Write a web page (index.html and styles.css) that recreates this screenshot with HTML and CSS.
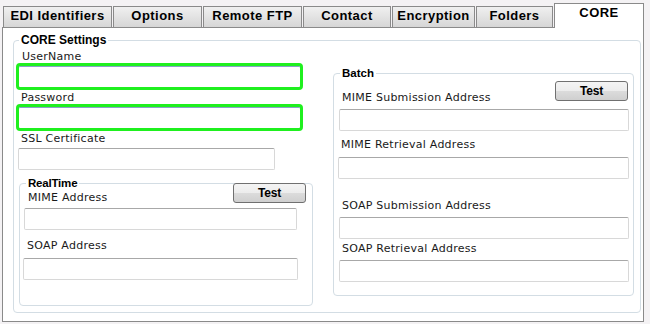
FILE: index.html
```html
<!DOCTYPE html>
<html>
<head>
<meta charset="utf-8">
<title>CORE</title>
<link rel="stylesheet" href="styles.css">
</head>
<body>
<div class="tabs">
  <div class="tab t-edi">EDI Identifiers</div>
  <div class="tab t-options">Options</div>
  <div class="tab t-ftp">Remote FTP</div>
  <div class="tab t-contact">Contact</div>
  <div class="tab t-enc">Encryption</div>
  <div class="tab t-folders">Folders</div>
  <div class="tab t-core active">CORE</div>
</div>
<div class="panel">
  <fieldset class="group core">
    <legend>CORE Settings</legend>
    <div class="cols">
      <div class="left">
        <label class="lbl l-user">UserName</label>
        <input class="box hl" type="text">
        <label class="lbl l-pass">Password</label>
        <input class="box hl" type="text">
        <label class="lbl l-ssl">SSL Certificate</label>
        <input class="box ssl" type="text">
        <fieldset class="group realtime">
          <legend>RealTime</legend>
          <div class="head">
            <label class="lbl l-rmime">MIME Address</label>
            <button class="btn rt-btn">Test</button>
          </div>
          <input class="box rt-mime" type="text">
          <label class="lbl l-rsoap">SOAP Address</label>
          <input class="box rt-soap" type="text">
        </fieldset>
      </div>
      <fieldset class="group batch">
        <legend>Batch</legend>
        <div class="head b-head">
          <label class="lbl l-bmsub">MIME Submission Address</label>
          <button class="btn b-btn">Test</button>
        </div>
        <input class="box b1" type="text">
        <label class="lbl l-bmret">MIME Retrieval Address</label>
        <input class="box b2" type="text">
        <label class="lbl l-bssub">SOAP Submission Address</label>
        <input class="box b3" type="text">
        <label class="lbl l-bsret">SOAP Retrieval Address</label>
        <input class="box b4" type="text">
      </fieldset>
    </div>
  </fieldset>
</div>
</body>
</html>
```

FILE: styles.css
```css
* { box-sizing: border-box; }
html, body { margin: 0; padding: 0; }
body {
  background: #f4f2f4;
  width: 650px;
  height: 324px;
  overflow: hidden;
  font-family: "DejaVu Sans", Verdana, sans-serif;
  color: #1a1a1a;
}

/* tabs */
.tabs {
  display: flex;
  align-items: flex-end;
  gap: 1px;
  margin-left: 3px;
  margin-top: 3px;
  height: 24px;
}
.tab {
  height: 21px;
  border: 1px solid #8a8a8a;
  border-bottom: none;
  background: linear-gradient(#f0f0f0, #e4e4e4 45%, #d6d6d6);
  font-family: "Liberation Sans", Arial, sans-serif;
  font-weight: bold;
  font-size: 13px;
  letter-spacing: 0.45px;
  line-height: 15px;
  padding-top: 1px;
  text-align: center;
  color: #000;
  white-space: nowrap;
}
.tab.active {
  height: 25px;
  margin-bottom: -1px;
  background: #fff;
  position: relative;
  z-index: 1;
}
.t-edi { width: 109px; }
.t-options { width: 89px; }
.t-ftp { width: 99px; }
.t-contact { width: 88px; }
.t-enc { width: 83px; }
.t-folders { width: 77px; }
.t-core { width: 90px; }

/* panel */
.panel {
  margin-left: 2px;
  width: 642px;
  height: 295px;
  border: 1px solid #8a8a8a;
  background: #fff;
}

/* group boxes */
.group {
  margin: 0;
  padding: 0;
  min-inline-size: 0;
  border: 1px solid #d3dde4;
  border-radius: 4px;
}
.group > legend {
  padding: 0 2px;
  margin-left: 5px;
  font-family: "Liberation Sans", Arial, sans-serif;
  font-weight: bold;
  font-size: 11.5px;
  line-height: 14px;
  color: #000;
}
.core {
  margin: 5px 0 0 10px;
  width: 628px;
  height: 280px;
}
.core > legend {
  font-size: 12px;
  margin-left: 5px;
}
.cols { display: flex; align-items: flex-start; }
.left { width: 300px; }

/* labels and boxes */
.lbl {
  display: block;
  font-size: 11px;
  letter-spacing: 0.25px;
  line-height: 12px;
  white-space: nowrap;
}
.box {
  display: block;
  height: 22px;
  border: 1px solid #d8d8d8;
  border-top-color: #a8a8a8;
  border-radius: 2px;
  background: #fff;
  padding: 0 3px;
  font: 11px "DejaVu Sans", sans-serif;
  outline: none;
}
.box.hl {
  height: 27px;
  width: 287px;
  margin-left: 2px;
  border: 3px solid #1ff01f;
  border-radius: 4px;
  box-shadow: inset 0 1px 0 #8aa0c8;
}
.l-user { margin-top: 4px; padding-left: 8px; }
.l-pass { margin-top: 2px; padding-left: 7px; }
.l-ssl { margin-top: 2px; padding-left: 7px; }
.ssl { margin-top: 3px; margin-left: 4px; width: 257px; }

.realtime {
  margin: 6px 0 0 5px;
  width: 294px;
  height: 130px;
}
.realtime > legend { margin-left: 6px; letter-spacing: -0.2px; }

.head {
  display: flex;
  align-items: flex-end;
  height: 20px;
  margin-top: -7px;
}
.btn {
  margin-left: auto;
  width: 73px;
  height: 20px;
  padding: 0;
  border: 1px solid #707070;
  border-radius: 3px;
  background: linear-gradient(#f4f4f4, #ececec 50%, #dcdcdc 50%, #cfcfcf);
  font-family: "Liberation Sans", Arial, sans-serif;
  font-weight: bold;
  font-size: 12px;
  letter-spacing: -0.2px;
  color: #000;
}
.rt-btn { margin-right: 6px; }
.l-rmime { padding-left: 8px; margin-bottom: -1px; }
.rt-mime { margin-top: 5px; margin-left: 4px; width: 273px; }
.l-rsoap { margin-top: 10px; padding-left: 7px; }
.rt-soap { margin-top: 6px; margin-left: 3px; width: 275px; }

.batch {
  margin: 19px 0 0 19px;
  width: 301px;
  height: 230px;
}
.batch > legend { margin-left: 6px; }
.b-head { margin-top: 1px; }
.b-btn { margin-right: 5px; }
.l-bmsub { padding-left: 8px; margin-bottom: -3px; }
.b1 { margin-top: 8px; margin-left: 5px; width: 290px; }
.l-bmret { margin-top: 8px; padding-left: 7px; }
.b2 { margin-top: 6px; margin-left: 4px; width: 291px; }
.l-bssub { margin-top: 21px; padding-left: 8px; }
.b3 { margin-top: 5px; margin-left: 5px; width: 290px; }
.l-bsret { margin-top: 4px; padding-left: 8px; }
.b4 { margin-top: 5px; margin-left: 5px; width: 290px; }
```
